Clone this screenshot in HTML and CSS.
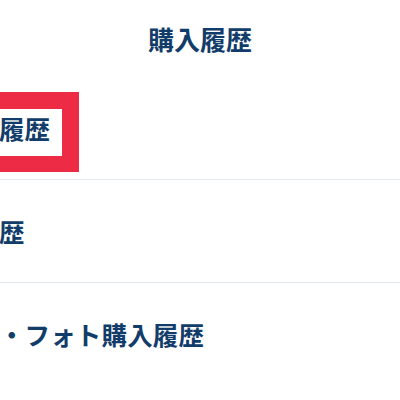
FILE: index.html
```html
<!DOCTYPE html>
<html lang="ja">
<head>
<meta charset="utf-8">
<link rel="stylesheet" href="styles.css">
</head>
<body>
<div class="page">
  <header class="header"><h1 class="title">購入履歴</h1></header>
  <ul class="menu">
    <li class="menu-item is-marked"><span class="label">チケット購入履歴</span><span class="marker"></span></li>
    <li class="menu-item"><span class="label">グッズ購入履歴</span></li>
    <li class="menu-item"><span class="label">電子チケット・フォト購入履歴</span></li>
  </ul>
</div>
</body>
</html>
```
FILE: styles.css
```css
html, body {
  margin: 0;
  padding: 0;
  background: #ffffff;
}
body {
  font-family: "Noto Sans CJK JP", "Noto Sans", sans-serif;
  color: #123c69;
  overflow: hidden;
}
.page {
  width: 400px;
  overflow: hidden;
}
.header {
  height: 77px;
  display: flex;
  align-items: center;
  justify-content: center;
}
.title {
  margin: 0;
  font-size: 26px;
  line-height: 26px;
  font-weight: 700;
  letter-spacing: 0;
}
.menu {
  list-style: none;
  margin: 0;
  padding: 0;
}
.menu-item {
  position: relative;
  height: 102px;
  border-bottom: 1px solid #e3e8ec;
  display: flex;
  align-items: center;
  white-space: nowrap;
}
.menu-item:last-child {
  border-bottom: none;
}
.label {
  display: block;
  margin-left: -155px;
  font-size: 25.5px;
  line-height: 26px;
  font-weight: 700;
  letter-spacing: 0.15px;
}
.marker {
  position: absolute;
  left: -40px;
  top: 15px;
  width: 85px;
  height: 47px;
  border: 17px solid #ee2b44;
  border-bottom-width: 16px;
}
```
